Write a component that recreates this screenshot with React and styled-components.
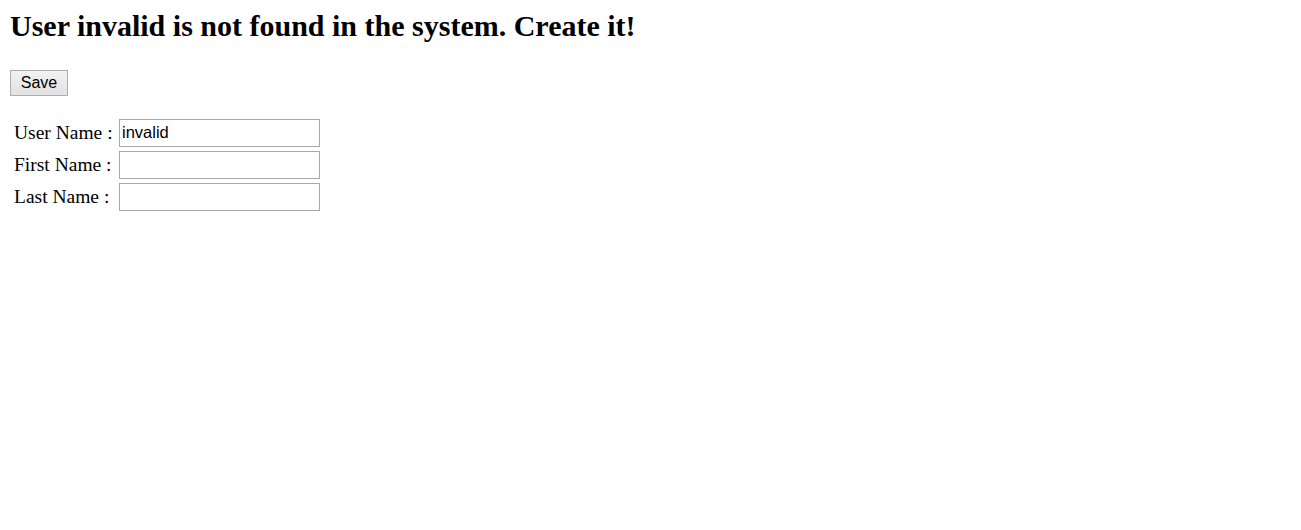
import styled, { createGlobalStyle } from 'styled-components'

const GlobalStyle = createGlobalStyle`
  body {
    margin: 0;
    background: #fff;
    font-family: "Liberation Serif", "Times New Roman", serif;
    color: #000;
  }
`

const fields = [
  { label: 'User Name :', value: 'invalid' },
  { label: 'First Name :', value: '' },
  { label: 'Last Name :', value: '' },
]

const App = () => {
  return (
    <Page>
      <GlobalStyle />
      <Heading>User invalid is not found in the system. Create it!</Heading>
      <SaveButton type="button">Save</SaveButton>
      <Form>
        {fields.map((field) => (
          <Row key={field.label}>
            <Label>{field.label}</Label>
            <Field defaultValue={field.value} />
          </Row>
        ))}
      </Form>
    </Page>
  )
}

const Page = styled.div`
  display: flex;
  flex-direction: column;
  align-items: flex-start;
  padding: 9px 10px;
`

const Heading = styled.h2`
  margin: 0 0 27px 0;
  font-size: 30px;
  font-weight: bold;
  line-height: 34px;
  white-space: nowrap;
`

const SaveButton = styled.button`
  height: 26px;
  width: 58px;
  padding: 0;
  font-family: "Liberation Sans", Arial, sans-serif;
  font-size: 16px;
  color: #000;
  border: 1px solid #adadad;
  border-radius: 0;
  background: linear-gradient(#f2f2f2, #e2e2e2);
  margin-bottom: 23px;
`

const Form = styled.div`
  display: grid;
  grid-template-columns: 105px 201px;
  row-gap: 4px;
  padding-left: 4px;
`

const Row = styled.div`
  display: contents;
`

const Label = styled.span`
  font-size: 19.5px;
  line-height: 22px;
  align-self: center;
  white-space: nowrap;
`

const Field = styled.input`
  box-sizing: border-box;
  width: 201px;
  height: 28px;
  border: 1px solid #a9a9a9;
  padding: 0 2px 2px 2px;
  font-family: "Liberation Sans", Arial, sans-serif;
  font-size: 16.5px;
  color: #000;
  outline: none;
  margin: 0;
`

export default App
